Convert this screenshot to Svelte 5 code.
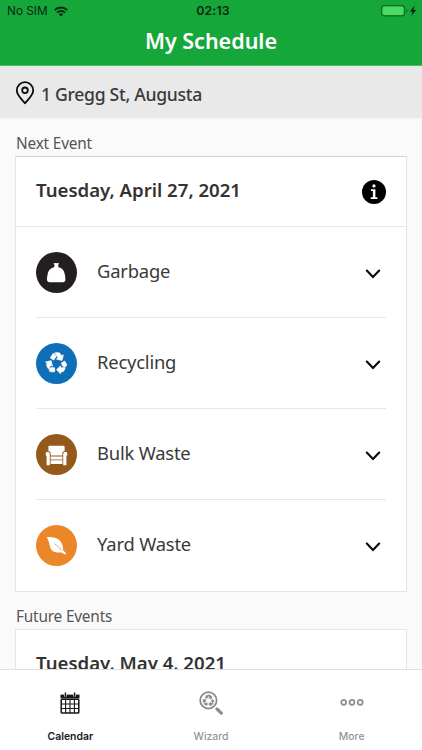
<script>
  const events = [
    { name: 'Garbage', icon: 'bag', color: '#231f20' },
    { name: 'Recycling', icon: 'recycle', color: '#0e6fb9' },
    { name: 'Bulk Waste', icon: 'chair', color: '#945a1b' },
    { name: 'Yard Waste', icon: 'leaf', color: '#ec8729' }
  ];
  const recyclePath =
    'M5.77 7.15 7.2 4.78l1.03-1.71c.39-.65 1.33-.65 1.72 0l1.48 2.46-1.23 2.06-1 1.62-3.43-2.06zm15.95 5.82-1.6-2.66-3.46 2L18.87 16H20c.76 0 1.45-.43 1.79-1.11.14-.28.21-.58.21-.89 0-.36-.1-.71-.28-1.03zM16 21h1.5c.76 0 1.45-.43 1.79-1.11L20.74 17H16v-2l-4 4 4 4v-2zm-6-4H5.7l-.84 1.41c-.3.5-.32 1.12-.06 1.65.28.57.87.94 1.52.94H10v-4zm-3.88-2.65 1.73 1.04L6.48 9.9 1 11.27l1.7 1.02-.41.69c-.35.59-.38 1.31-.07 1.92l1.63 3.26 2.27-3.81zm10.9-9.21-1.3-2.17C15.35 2.37 14.7 2 14 2h-3.53l3.12 5.2-1.72 1.03 5.49 1.37 1.37-5.49-1.71 1.03z';
</script>

<div class="screen">
  <header>
    <div class="status">
      <div class="carrier">
        <span>No SIM</span>
        <svg width="14" height="11" viewBox="0 0 14 11">
          <g fill="none" stroke="#07280f" stroke-width="2">
            <path d="M.8 4.1a8.8 8.8 0 0 1 12.4 0" />
            <path d="M3 6.6a5.7 5.7 0 0 1 8 0" />
          </g>
          <path d="M4.8 8.3a3.2 3.2 0 0 1 4.4 0L7 10.6z" fill="#07280f" />
        </svg>
      </div>
      <div class="time">02:13</div>
      <div class="power">
        <svg width="37" height="12" viewBox="0 0 37 12">
          <rect x=".6" y=".6" width="23" height="10.3" rx="2.6" fill="none" stroke="#0b6d24" stroke-width="1.1" />
          <rect x="1.6" y="1.6" width="21" height="8.3" rx="1.6" fill="#4cd964" />
          <path d="M25.2 4v3.6q1.3-.5 1.3-1.8T25.2 4z" fill="#0b6d24" />
          <path d="M33.6.6l-4.5 5.8h2.5l-1.4 4.4 4.9-5.9h-2.7z" fill="#041b09" />
        </svg>
      </div>
    </div>
    <h1>My Schedule</h1>
  </header>

  <div class="address">
    <svg width="20" height="24" viewBox="0 0 20 24" fill="none" stroke="#0a0a0a" stroke-width="1.8">
      <path d="M10 22.3C7.2 18.9 1.8 14 1.8 9.4a8.2 8.2 0 0 1 16.4 0c0 4.6-5.4 9.5-8.2 12.9z" stroke-linejoin="round" />
      <circle cx="10" cy="9.3" r="2.8" />
    </svg>
    <span>1 Gregg St, Augusta</span>
  </div>

  <main>
    <h2>Next Event</h2>
    <section class="card">
      <div class="date">
        <span>Tuesday, April 27, 2021</span>
        <svg width="24" height="24" viewBox="0 0 24 24">
          <circle cx="12" cy="12" r="12" fill="#000" />
          <circle cx="12" cy="5.9" r="1.6" fill="#fff" />
          <path d="M8.9 9.2h4.5v8h2v1.7H8.7v-1.7h2.2v-6.3h-2z" fill="#fff" />
        </svg>
      </div>
      <div class="rows">
        {#each events as event}
          <div class="row">
            <div class="disc" style="background: {event.color}">
              <svg width="41" height="41" viewBox="0 0 41 41" fill="#fff">
                {#if event.icon === 'bag'}
                  <path d="M17.6 11.3q1.3-.4 2.7 0 1.5-.4 2.7 0l-.9 1.9.4 2c3.5.6 5.5 3 6.1 6.3.5 2.5.9 4.6.8 6.3-.1 1.7-.9 2.4-2.4 2.4H13.4c-1.5 0-2.3-.7-2.4-2.4-.1-1.7.3-3.8.8-6.3.6-3.3 2.7-5.7 6.3-6.3l.4-2z" />
                {:else if event.icon === 'recycle'}
                  <path transform="translate(8.6 7.8)" d={recyclePath} stroke="#fff" stroke-width=".8" stroke-linejoin="round" />
                {:else if event.icon === 'chair'}
                  <path d="M13.4 11.8h14.2q1 0 1 1V17q-2.3.4-2.3 2.6v2H14.7v-2q0-2.2-2.3-2.6v-4.2q0-1 1-1z" />
                  <path d="M10 18.5q1.3-1.3 2.9-.3.9.6.9 1.7v11.4h-3.2V22.5Q8.8 20.4 10 18.5zM31 18.5q-1.3-1.3-2.9-.3-.9.6-.9 1.7v11.4h3.2v-8.8q1.8-2.1.6-4zM14.6 22.5h11.8v2.9H14.6zM14.6 26.2h11.8v3.9H14.6z" />
                {:else}
                  <path d="M10.6 12.1C19 11.4 25 14 26.6 20.6q.5 2.3.3 4.5l3.3 3.4-.8.9-4.9-2.2C19.4 28.4 15.3 26.6 14 21.6 13.1 18 12.6 15 10.6 12.1z" />
                  <path d="M18.2 18.6c3.1 1.9 5.3 4 7.5 6.9" fill="none" stroke="#ec8729" stroke-width=".8" />
                {/if}
              </svg>
            </div>
            <span class="name">{event.name}</span>
            <svg class="chevron" width="16" height="10" viewBox="0 0 16 10">
              <path d="M1.8 1.6 8 7.9l6.2-6.3" fill="none" stroke="#080808" stroke-width="2.1" stroke-linecap="round" />
            </svg>
          </div>
        {/each}
      </div>
    </section>
    <h2 class="future">Future Events</h2>
    <section class="card next">
      <div class="date"><span>Tuesday, May 4, 2021</span></div>
    </section>
  </main>

  <nav>
    <div class="tab active">
      <svg width="20" height="22" viewBox="0 0 20 22">
        <path d="M.5 2.6h19v3.8H.5z" fill="#171717" />
        <path d="M5.4.2v4.3M14.6.2v4.3" stroke="#fff" stroke-width="2.6" />
        <path d="M5.4.4v4M14.6.4v4" stroke="#171717" stroke-width="1.4" />
        <rect x="1.2" y="7.3" width="17.6" height="13.8" rx=".8" fill="none" stroke="#171717" stroke-width="1.5" />
        <path d="M5.6 7.5v13.6M10 7.5v13.6M14.4 7.5v13.6M1 12h18M1 16.5h18" stroke="#171717" stroke-width="1.1" />
      </svg>
      <span>Calendar</span>
    </div>
    <div class="tab">
      <svg width="24" height="24" viewBox="0 0 24 24">
        <circle cx="9.4" cy="9.4" r="8.2" fill="none" stroke="#8c8c8c" stroke-width="1.8" />
        <path transform="translate(2.9 2.6) scale(.55)" d={recyclePath} fill="#8c8c8c" stroke="#8c8c8c" stroke-width=".6" />
        <path d="m18 18 4.3 4.1" stroke="#8c8c8c" stroke-width="3.2" stroke-linecap="round" />
      </svg>
      <span>Wizard</span>
    </div>
    <div class="tab">
      <svg width="24" height="24" viewBox="0 0 24 24" fill="none" stroke="#8c8c8c" stroke-width="1.7">
        <circle cx="3.7" cy="11.3" r="2.5" />
        <circle cx="12" cy="11.3" r="2.5" />
        <circle cx="20.2" cy="11.3" r="2.5" />
      </svg>
      <span>More</span>
    </div>
  </nav>
</div>

<style>
  :global(body) { margin: 0; }
  .screen {
    width: 422px;
    height: 750px;
    display: flex;
    flex-direction: column;
    overflow: hidden;
    background: #fafafa;
    color: #3a3a3a;
    font-family: 'Noto Sans', sans-serif;
    white-space: nowrap;
  }
  svg { display: block; flex: none; }
  header { height: 65px; flex: none; background: #16a73b; border-bottom: 1px solid #55b96b; }
  .status {
    height: 22px;
    display: grid;
    grid-template-columns: 1fr auto 1fr;
    align-items: center;
    font: 12px/22px Inter, sans-serif;
    color: #07280f;
  }
  .carrier { display: flex; align-items: center; gap: 6px; padding-left: 7px; font-size: 11.8px; }
  .time { font-weight: 600; font-size: 12.3px; letter-spacing: .2px; padding-left: 4px; }
  .power { display: flex; justify-content: flex-end; padding-right: 4px; }
  h1 {
    margin: 0;
    text-align: center;
    font-size: 21.5px;
    font-weight: 600;
    line-height: 38px;
    color: #fff;
  }
  .address {
    height: 52px;
    flex: none;
    display: flex;
    align-items: center;
    gap: 6px;
    padding-left: 15px;
    background: #e9e9e9;
    border-bottom: 1px solid #f3f3f3;
    font-size: 17.6px;
    letter-spacing: -.3px;
    font-weight: 500;
  }
  .address span { padding-top: 3px; }
  .address svg { margin-top: 2px; }
  main { flex: 1; min-height: 0; overflow: hidden; padding: 14px 15px 0; }
  h2 {
    margin: 0;
    height: 23px;
    padding-left: 1px;
    font-size: 15.4px;
    letter-spacing: -.2px;
    font-weight: 400;
    line-height: 21px;
    color: #555;
  }
  .card { box-sizing: border-box; height: 436px; border: 1px solid #e4e4e4; border-top-color: #d4d4d4; background: #fff; }
  .date {
    height: 69px;
    display: flex;
    align-items: center;
    justify-content: space-between;
    padding: 0 20px;
    border-bottom: 1px solid #e8e8e8;
    font-size: 18.6px;
    font-weight: 600;
    color: #333;
  }
  .date span { padding-bottom: 4px; }
  .rows { padding: 0 20px; }
  .row { height: 90px; display: flex; align-items: center; border-bottom: 1px solid #e8e8e8; }
  .row:last-child { border: 0; }
  .disc { width: 41px; height: 41px; border-radius: 50%; }
  .name { flex: 1; padding: 0 0 3px 20px; font-size: 18.4px; letter-spacing: -.2px; }
  .chevron { margin-right: 5px; margin-top: 3px; }
  .future { height: 37px; line-height: 50px; }
  .next { height: 200px; border-top-color: #e4e4e4; }
  nav {
    flex: none;
    box-sizing: border-box;
    height: 81px;
    border-top: 1px solid #e0e0e0;
    background: #fff;
    display: grid;
    grid-template-columns: repeat(3, 1fr);
  }
  .tab {
    display: flex;
    flex-direction: column;
    align-items: center;
    justify-content: space-between;
    padding: 21px 0 5px;
    font: 500 10.4px/16px Inter, sans-serif;
    color: #949494;
  }
  .tab.active { color: #171717; font-weight: 600; padding-top: 22px; }
</style>
